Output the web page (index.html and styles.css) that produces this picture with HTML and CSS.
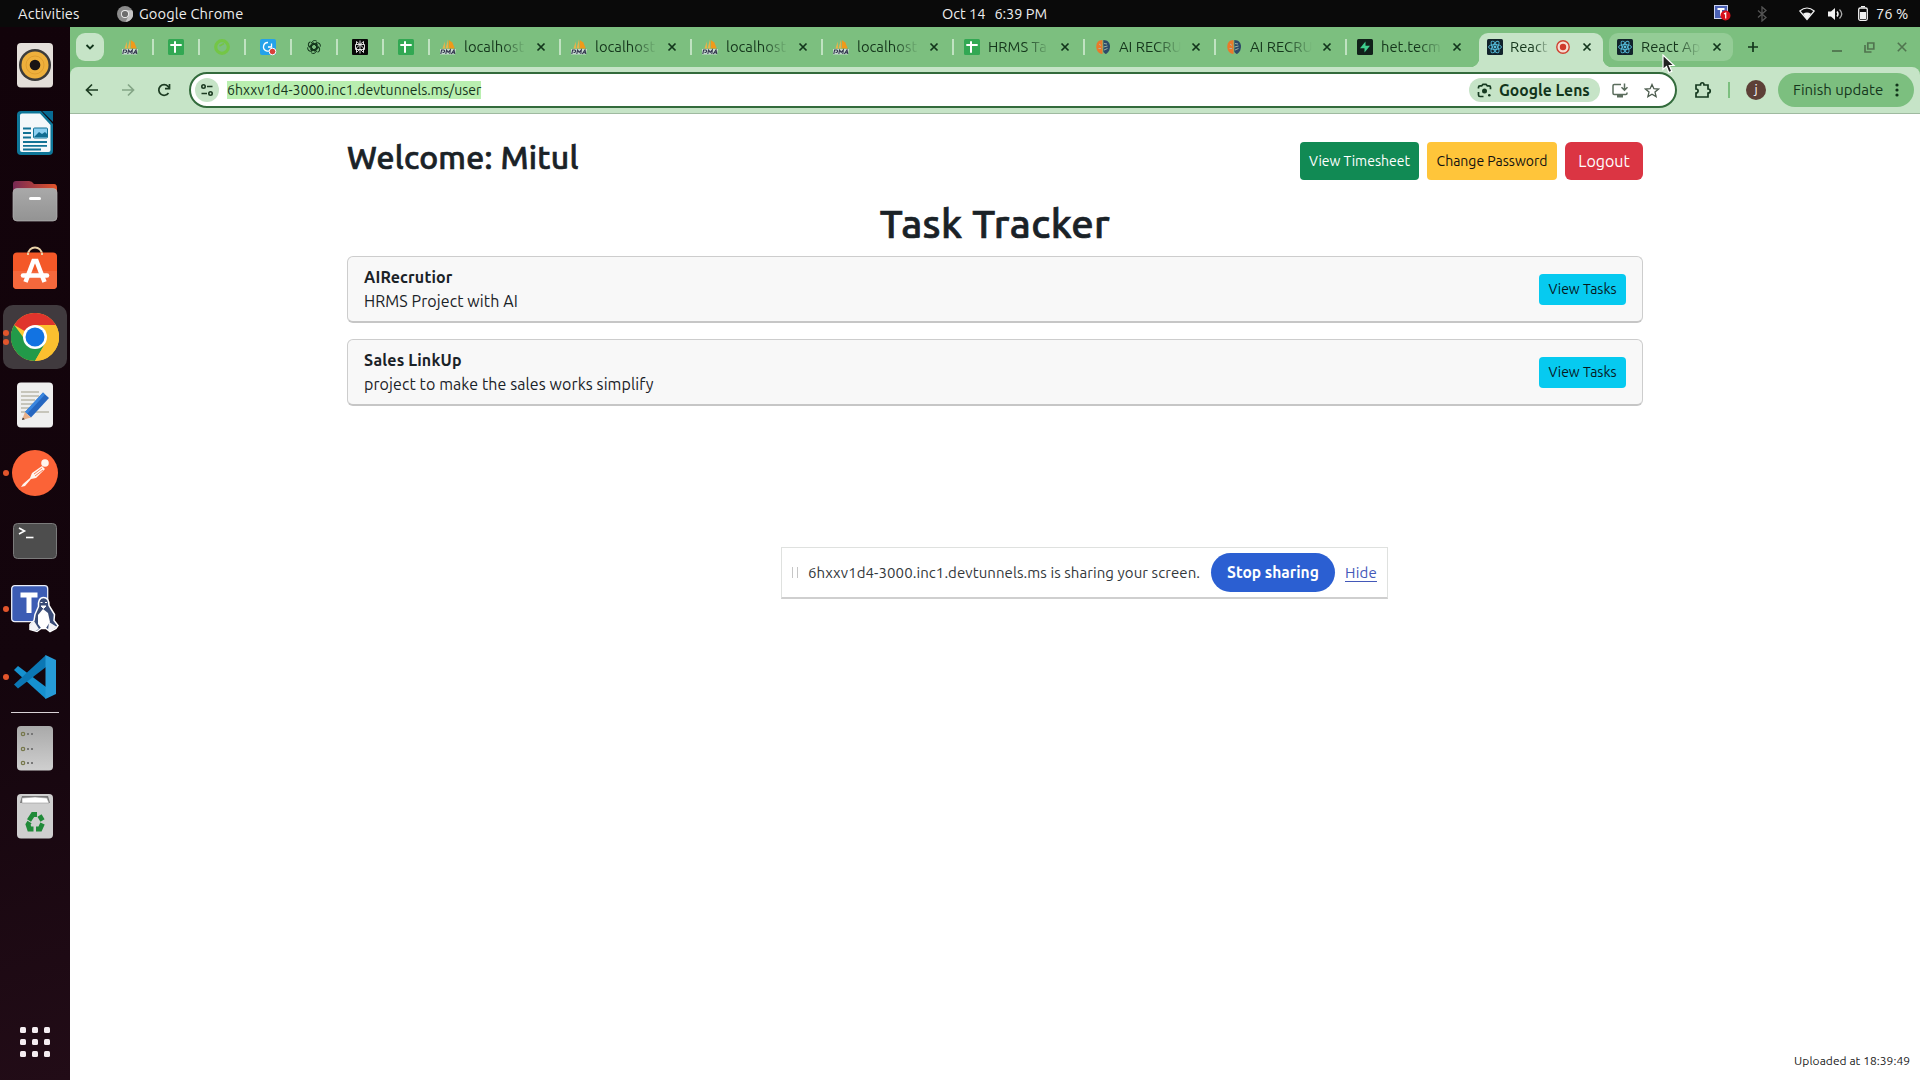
FILE: index.html
```html
<!DOCTYPE html>
<html lang="en">
<head>
<meta charset="utf-8">
<title>Task Tracker</title>
<link rel="stylesheet" href="styles.css">
</head>
<body>
<svg width="0" height="0" class="defs" aria-hidden="true">
  <defs>
    <symbol id="pma" viewBox="0 0 16 16"><path d="M2.500 9.500 4.800 2.500 5 9.500zM5.500 9.500 8 .5l.4 9z" fill="#e9b34a"/><path d="M8.800 9.500V1l3.500 2.500 2.500 6z" fill="#f09a1a"/><path d="M0 10h16l-1 5.500H0z" fill="#dfe3ea" opacity=".75"/><path d="M.8 15l.8-4h2q1.300.2 1 1.500T2.500 13.300M5.800 15l.8-4 1.600 2.300L10.300 11l-.5 4M11.300 15l2.700-4 .8 4m-2.300-1.200h2" fill="none" stroke="#30334c" stroke-width="1.100"/></symbol>
    <symbol id="sheet" viewBox="0 0 16 16"><rect width="16" height="16" rx="1.500" fill="#32a853"/><path d="M2.300 6h11.400M7 2.300v11.400" stroke="#fff" stroke-width="2"/></symbol>
    <symbol id="close" viewBox="0 0 10 10"><path d="M1.500 1.500l7 7m0-7l-7 7" stroke="#12351b" stroke-width="1.700"/></symbol>
    <symbol id="brain" viewBox="0 0 16 16"><path d="M7.500 1C3 1 1.500 4 1.300 7c-.2 4 2 8 6.200 8z" fill="#e9792b"/><path d="M8.300 1C13 1 14.800 4 15 7c.1 4-2 7.500-4.500 8l-2.200-2z" fill="#2d4a68"/><path d="M9 4.500l3 .5m-3.500 3l4-1M9 11l3.500-1.500M4 5l2 1.500M3.500 9.500H6" stroke="#a8bda8" stroke-width=".9" fill="none"/></symbol>
    <symbol id="react" viewBox="0 0 16 16"><rect width="16" height="16" rx="1.500" fill="#12232b"/><g fill="none" stroke="#56bcdc" stroke-width=".9"><ellipse cx="8" cy="8" rx="6.500" ry="2.500"/><ellipse cx="8" cy="8" rx="6.500" ry="2.500" transform="rotate(60 8 8)"/><ellipse cx="8" cy="8" rx="6.500" ry="2.500" transform="rotate(120 8 8)"/></g><circle cx="8" cy="8" r="1.400" fill="#56bcdc"/></symbol>
  </defs>
</svg>

<header class="topbar">
  <span class="t activities">Activities</span>
  <svg class="app-icon" width="16" height="16" viewBox="0 0 16 16"><circle cx="8" cy="8" r="8" fill="#8b8b8b"/><path d="M8 4.200h7.200A8 8 0 0 1 8.500 16l3-6z" fill="#c4c4c4"/><circle cx="8" cy="8" r="4" fill="#eee"/><circle cx="8" cy="8" r="3.100" fill="#6d6d6d"/></svg>
  <span class="t app-name">Google Chrome</span>
  <span class="clock"><span class="t">Oct 14</span><span class="t">6:39 PM</span></span>
  <div class="tray">
    <svg width="17" height="17" viewBox="0 0 17 17"><rect x=".5" y=".5" width="13" height="13" fill="#4a60b4" stroke="#ccd3ee"/><path d="M3.500 4h7M7 4v7" stroke="#fff" stroke-width="2"/><circle cx="11.500" cy="10.500" r="5" fill="#d8101c"/><path d="M10 9l1.700-1v5.500" fill="none" stroke="#fff" stroke-width="1.200"/></svg>
    <svg class="bt" width="10" height="16" viewBox="0 0 10 16"><path d="M1 4.500l8 7L5 15V1l4 3.500-8 7" fill="none" stroke="#555" stroke-width="1.300"/></svg>
    <svg class="wifi" width="16" height="14" viewBox="0 0 16 14"><path d="M.8 4Q8-2 15.200 4L8 12.500z" fill="none" stroke="#f2f2f2" stroke-width="1.200"/><path d="M4 6.800q4-2.500 8 0L8 12.500z" fill="#f2f2f2"/></svg>
    <svg class="vol" width="16" height="14" viewBox="0 0 16 14"><path d="M0 4.500h3L7 1v12L3 9.500H0z" fill="#f2f2f2"/><path d="M9 4.500q2 2.500 0 5" fill="none" stroke="#f2f2f2" stroke-width="1.500"/><path d="M11.500 2.500q4.500 4.500 0 9" fill="none" stroke="#aaa" stroke-width="1.300"/></svg>
    <svg class="bat" width="10" height="15" viewBox="0 0 10 15"><rect x=".7" y="2" width="8.600" height="12.300" rx="1.500" fill="none" stroke="#f2f2f2" stroke-width="1.300"/><path d="M3 .6h4" stroke="#f2f2f2" stroke-width="1.200"/><path d="M2 6h6v7H2z" fill="#f2f2f2"/></svg>
    <span class="t percent">76 %</span>
  </div>
</header>

<div class="desktop">
  <nav class="dock">
    <div class="dock-item"><svg viewBox="0 0 48 48"><rect x="6" y="2" width="36" height="44.500" rx="4" fill="#e4dfda"/><circle cx="24" cy="24" r="16" fill="#3b3b3a"/><circle cx="24" cy="24" r="13.500" fill="#eeb03c"/><circle cx="24" cy="24" r="9" fill="none" stroke="#d7962a" stroke-width=".7"/><circle cx="24" cy="24" r="5.300" fill="#191414"/></svg></div>
    <div class="dock-item"><svg viewBox="0 0 48 48"><path d="M10 2h20l12 13v27q0 4-4 4H10q-4 0-4-4V6q0-4 4-4z" fill="#0e7698"/><path d="M11 4.500h18L39.500 16v25q0 2-2 2H11q-2 0-2-2V6.500q0-2 2-2z" fill="#f4f8fa"/><path d="M31 2h11v11z" fill="#086b93"/><path d="M12 19.500h8m-8 4.500h8m-8 4.500h8M12 33h24m-24 3.800h24M12 40.500h18" stroke="#127295" stroke-width="1.800"/><rect x="22.500" y="19" width="14" height="10" rx="1" fill="#8dcff0" stroke="#127295"/><path d="M23 28l5-5 3 2 3-2 2 2v3z" fill="#116c91"/></svg></div>
    <div class="dock-item"><svg viewBox="0 0 48 48"><defs><linearGradient id="fo"><stop stop-color="#772953"/><stop offset="1" stop-color="#e2542a"/></linearGradient><linearGradient id="fg" x2="0" y2="1"><stop stop-color="#a9a9a9"/><stop offset="1" stop-color="#939393"/></linearGradient></defs><path d="M2 19V7q0-3 3-3h13q3 0 5 3h20q3 0 3 4v8z" fill="url(#fo)"/><rect x="2" y="11.500" width="44" height="32.500" rx="4" fill="url(#fg)" stroke="#b5b5b5" stroke-width=".7"/><rect x="18" y="20" width="12" height="3" rx="1.500" fill="#fff"/></svg></div>
    <div class="dock-item"><svg viewBox="0 0 48 48"><path d="M17 10c0-10 14-10 14 0" fill="none" stroke="#ead2a8" stroke-width="2"/><rect x="2" y="7.500" width="44" height="36.500" rx="4" fill="#f45828"/><path d="M2 26h44v14q0 4-4 4H6q-4 0-4-4z" fill="#f4683c"/><path d="M17 10V8m14 2V8" stroke="#ead2a8" stroke-width="2"/><path d="M14.500 37L22.500 16h3L33.500 37" fill="none" stroke="#fff" stroke-width="4.500"/><path d="M12 30.500h24" stroke="#fff" stroke-width="4.500" stroke-linecap="round"/></svg></div>
    <div class="dock-item active"><i class="dot two"></i><svg viewBox="0 0 48 48"><circle cx="24" cy="24" r="24" fill="#fcc934"/><path d="M24 24L3.200 12A24 24 0 0 1 44.800 12z" fill="#e0342c"/><path d="M24 24h-12L3.200 12A24 24 0 0 0 24 48l10.400-18z" fill="#229a49"/><path d="M24 12h20.800A24 24 0 0 1 24 48l10.400-18z" fill="#fbc02f"/><circle cx="24" cy="24" r="12" fill="#fff"/><circle cx="24" cy="24" r="9.500" fill="#1273e2"/></svg></div>
    <div class="dock-item"><svg viewBox="0 0 48 48"><rect x="6" y="1.500" width="36" height="45" rx="4" fill="#efefef"/><path d="M10 11h18m-18 4h18m-18 4h14m-14 4h12m-12 4h8m-8 4h28" stroke="#bbb8ab" stroke-width="1.400"/><path d="M32 11.500l6 5.500-18 19.500-6-5.500z" fill="#2666c0"/><path d="M32 11.500l2 2-18 19.500-2-2z" fill="#3b86df"/><path d="M14 31l6 5.500L11 39z" fill="#e8b08a"/><path d="M11.800 36.500l2 1.700L11 39z" fill="#333"/></svg></div>
    <div class="dock-item"><i class="dot"></i><svg viewBox="0 0 48 48"><circle cx="24" cy="24" r="23" fill="#fb6337"/><circle cx="34" cy="14" r="3.800" fill="#fff4ee"/><path d="M31 17l3 3-9 9-5 1-6 7-4 1 2-3 7-6 2-5z" fill="#fff4ee"/><path d="M23 25l8-6m-7 8l8-6" stroke="#fb6337" stroke-width=".8"/></svg></div>
    <div class="dock-item"><svg viewBox="0 0 48 48"><rect x="2.500" y="6.500" width="43" height="35" rx="4" fill="#4d4d4d" stroke="#7b7b7b"/><path d="M8 11l5.500 3L8 17" fill="none" stroke="#fff" stroke-width="1.600"/><path d="M15 20.500h7.500" stroke="#fff" stroke-width="1.600"/></svg></div>
    <div class="dock-item"><i class="dot"></i><svg viewBox="0 0 48 48" overflow="visible"><rect x=".7" y=".7" width="36" height="36" rx="3" fill="#3c5cb4" stroke="#e9edf8" stroke-width="1.300"/><path d="M9.500 10h17M18 10v18" stroke="#fff" stroke-width="5"/><path d="M32.500 12.500c4.500 0 5.500 3.500 5.500 8l5.500 9-.5 6 4 5-2 3-6 3-4-3h-5l-4 3-7-2v-5l4-4 1-6 3.500-8c-.5-5 1-9 5-9z" fill="#394c78" stroke="#fff" stroke-width="1.500"/><path d="M32 24l-5 6v9l3 4h5l4-6-2-9z" fill="#fff"/><path d="M23 36l5 8-4 2-5-1.500v-4zM38 37l8 5-7 4.500-2-1.500z" fill="#f4f4f7"/><path d="M30 21h5l-2.500 2.500zM29.500 17.500h2m2.500 0h2" stroke="#fff" fill="#fff"/></svg></div>
    <div class="dock-item"><i class="dot"></i><svg viewBox="0 0 48 48"><path d="M3 17l4-4 28 21v12z" fill="#1691cf"/><path d="M3 31.500l4 4L35 14V2z" fill="#0b77b4"/><path d="M34.500 2L45 7v34l-10.500 5z" fill="#269bd7"/></svg></div>
    <hr class="dock-line">
    <div class="dock-item"><svg viewBox="0 0 48 48"><defs><linearGradient id="dr" x2="0" y2="1"><stop stop-color="#a9a9a9"/><stop offset="1" stop-color="#cfcfcf"/></linearGradient></defs><rect x="6" y="2" width="36" height="44.500" rx="4" fill="url(#dr)"/><g fill="none" stroke="#76774a" stroke-width="1.200"><circle cx="12" cy="10" r="1.700"/><circle cx="12" cy="25" r="1.700"/><circle cx="12" cy="39" r="1.700"/></g><path d="M16 10h2m2 0h2m-6 15h2m2 0h2m-6 14h2m2 0h2" stroke="#777" stroke-width="1.800"/></svg></div>
    <div class="dock-item"><svg viewBox="0 0 48 48"><rect x="6" y="2" width="36" height="44.500" rx="4" fill="#cfcfcf"/><path d="M9 11l2-7h26l2 7z" fill="#777"/><path d="M11 11V6l13-1 12 1 2 5z" fill="#fff" stroke="#999" stroke-width=".6"/><g fill="none" stroke="#218a39" stroke-width="4.800"><path d="M18 28.500l4-6h4"/><path d="M28.500 23.500l3 5"/><path d="M31.500 31.500l-2.500 5.500h-4"/><path d="M22.500 37h-4L17 32.500l1.500-2.500"/></g></svg></div>
    <div class="app-grid"><i></i><i></i><i></i><i></i><i></i><i></i><i></i><i></i><i></i></div>
  </nav>

  <section class="browser">
    <div class="tabstrip">
      <div class="tab-search"><svg width="10" height="8" viewBox="0 0 10 8"><path d="M1.500 2l3.500 3.500L8.500 2" fill="none" stroke="#12351b" stroke-width="1.800"/></svg></div>
      <div class="pin"><svg><use href="#pma"/></svg></div>
      <div class="pin"><svg><use href="#sheet"/></svg></div>
      <div class="pin"><svg viewBox="0 0 16 16"><circle cx="8" cy="8" r="6.300" fill="none" stroke="#74c646" stroke-width="3.200"/><path d="M5.500 7l4.500-2.500" stroke="#74c646" stroke-width="1.500"/></svg></div>
      <div class="pin"><svg viewBox="0 0 16 16" overflow="visible"><rect width="16" height="16" rx="2" fill="#24a2ea"/><path d="M8 3.500a4.300 4.300 0 1 0 3.500 6.500M8 8h3.500V4.500" fill="none" stroke="#fff" stroke-width="1.300"/><circle cx="12.500" cy="12.500" r="3.300" fill="#d9403a" stroke="#fff"/></svg></div>
      <div class="pin"><svg viewBox="0 0 16 16"><g fill="none" stroke="#12351b" stroke-width="1"><path id="petal" d="M8 5.200l2.600 1.500v4.100L8 12.300M8 5.200L5.300 3.700M10.600 6.700l-5-2.900C6.500 1.500 9 .8 10.800 2.300"/><use href="#petal" transform="rotate(60 8 8)"/><use href="#petal" transform="rotate(120 8 8)"/><use href="#petal" transform="rotate(180 8 8)"/><use href="#petal" transform="rotate(240 8 8)"/><use href="#petal" transform="rotate(300 8 8)"/></g></svg></div>
      <div class="pin"><svg viewBox="0 0 16 16"><rect width="16" height="16" rx="1" fill="#080808"/><path d="M8 1.500v13M3.500 5.500h9v5h-9zM4.500 5.500v-3L8 5.500l3.500-3v3M8 5.500L4.500 9v4.500L8 10l3.500 3.500V9z" fill="none" stroke="#f0f0f0" stroke-width=".9"/></svg></div>
      <div class="pin"><svg><use href="#sheet"/></svg></div>
      <div class="tab"><svg class="fav"><use href="#pma"/></svg><span class="t title">localhost</span><svg class="x"><use href="#close"/></svg></div>
      <div class="tab"><svg class="fav"><use href="#pma"/></svg><span class="t title">localhost</span><svg class="x"><use href="#close"/></svg></div>
      <div class="tab"><svg class="fav"><use href="#pma"/></svg><span class="t title">localhost</span><svg class="x"><use href="#close"/></svg></div>
      <div class="tab"><svg class="fav"><use href="#pma"/></svg><span class="t title">localhost</span><svg class="x"><use href="#close"/></svg></div>
      <div class="tab"><svg class="fav"><use href="#sheet"/></svg><span class="t title">HRMS Ta</span><svg class="x"><use href="#close"/></svg></div>
      <div class="tab"><svg class="fav"><use href="#brain"/></svg><span class="t title">AI RECRU</span><svg class="x"><use href="#close"/></svg></div>
      <div class="tab"><svg class="fav"><use href="#brain"/></svg><span class="t title">AI RECRU</span><svg class="x"><use href="#close"/></svg></div>
      <div class="tab last"><svg class="fav" viewBox="0 0 16 16"><rect width="16" height="16" rx="1.500" fill="#11211a"/><path d="M8.500 2.500v4.300h4.500L7.500 13.500V9.200H3z" fill="#3fcf8e"/></svg><span class="t title">het.tecm</span><svg class="x"><use href="#close"/></svg></div>
      <div class="tab current"><svg class="fav"><use href="#react"/></svg><span class="t title">React</span><svg class="rec" width="14" height="14" viewBox="0 0 14 14"><circle cx="7" cy="7" r="6.200" fill="#f6ddd2" stroke="#cf4030" stroke-width="1.400"/><circle cx="7" cy="7" r="3.200" fill="#d0392b"/></svg><svg class="x"><use href="#close"/></svg></div>
      <div class="tab hover"><svg class="fav"><use href="#react"/></svg><span class="t title">React Ap</span><svg class="x"><use href="#close"/></svg>
        <svg class="cursor" width="14" height="20" viewBox="0 0 14 20"><path d="M1 1v14.500l3.500-3 2.300 6 3-1.200-2.500-5.800H12z" fill="#222" stroke="#fff" stroke-width="1.200"/></svg>
      </div>
      <svg class="plus" width="12" height="12" viewBox="0 0 12 12"><path d="M6 1v10M1 6h10" stroke="#12351b" stroke-width="1.700"/></svg>
      <div class="win">
        <svg width="10" height="10" viewBox="0 0 10 10"><path d="M0 9h10" stroke="#50744f" stroke-width="1.800"/></svg>
        <svg width="11" height="11" viewBox="0 0 11 11"><path d="M3.800 1h6v6h-6z M1 3v7h6.500" fill="none" stroke="#50744f" stroke-width="1.700"/></svg>
        <svg width="10" height="10" viewBox="0 0 10 10"><path d="M.8.8l8.400 8.400m0-8.400L.8 9.200" stroke="#50744f" stroke-width="1.600"/></svg>
      </div>
    </div>

    <div class="toolbar">
      <div class="nav">
        <svg width="14" height="14" viewBox="0 0 14 14"><path d="M13 7H2m5-5.500L1.500 7 7 12.500" fill="none" stroke="#1c3b22" stroke-width="1.700"/></svg>
        <svg width="14" height="14" viewBox="0 0 14 14"><path d="M1 7h11M7 1.500L12.500 7 7 12.500" fill="none" stroke="#84a586" stroke-width="1.700"/></svg>
        <svg width="14" height="14" viewBox="0 0 14 14"><path d="M11.500 10A5.300 5.300 0 1 1 11 3.400L12.500 5" fill="none" stroke="#1c3b22" stroke-width="1.700"/><path d="M12.500 1v4.700H8" fill="none" stroke="#1c3b22" stroke-width="1.700"/></svg>
      </div>
      <div class="omnibox">
        <span class="site"><svg width="14" height="14" viewBox="0 0 14 14"><g fill="none" stroke="#1c3b22" stroke-width="1.600"><circle cx="3.500" cy="3.500" r="1.700"/><path d="M7 3.500h5.500M1.500 10.500H7"/><circle cx="10.500" cy="10.500" r="1.700"/></g></svg></span>
        <span class="t url">6hxxv1d4-3000.inc1.devtunnels.ms/user</span>
        <span class="lens"><svg width="15" height="15" viewBox="0 0 15 15"><g fill="none" stroke="#163a20" stroke-width="1.700"><path d="M1.500 5.500V4.200q0-1.400 1.500-1.400h1.700L6 1.300h3l1.300 1.500H12q1.500 0 1.500 1.400v2M1.500 9v3q0 1.500 1.500 1.500h3.500"/></g><circle cx="7.500" cy="8" r="2.500" fill="#163a20"/><circle cx="12.300" cy="12.300" r="1.300" fill="#163a20"/></svg><span class="t">Google Lens</span></span>
        <svg class="inst" width="17" height="15" viewBox="0 0 17 15"><path d="M9 1.500H2.200Q1 1.500 1 2.700v7.600q0 1.200 1.200 1.200h11.600q1.200 0 1.200-1.200V9.500M12.500.5v6.500m-3-2.700l3 3 3-3" fill="none" stroke="#5b6d5d" stroke-width="1.500"/><path d="M5 12h6v2.500H5z" fill="#5b6d5d"/></svg>
        <svg class="star" width="16" height="15" viewBox="0 0 16 15"><path d="M8 1.500l1.900 4.200 4.600.4-3.500 3 1.100 4.500L8 11.200l-4.100 2.400L5 9.100l-3.500-3 4.600-.4z" fill="none" stroke="#4c5c4e" stroke-width="1.300"/></svg>
      </div>
      <svg class="ext" width="18" height="18" viewBox="0 0 18 18"><path d="M2 4h4.500C6.500 1 10 1 10 4h4v4c3 0 3 4 0 4v4H2v-4c2.800 0 2.800-4 0-4z" fill="none" stroke="#163a20" stroke-width="1.700"/></svg>
      <i class="tool-sep"></i>
      <span class="avatar t">j</span>
      <span class="update"><span class="t">Finish update</span><svg width="4" height="16" viewBox="0 0 4 16"><g fill="#12351b"><circle cx="2" cy="3" r="1.600"/><circle cx="2" cy="8" r="1.600"/><circle cx="2" cy="13" r="1.600"/></g></svg></span>
    </div>

    <main class="page">
      <div class="container">
        <div class="head">
          <h2 class="t">Welcome: Mitul</h2>
          <div class="actions">
            <button class="btn green">View Timesheet</button>
            <button class="btn yellow">Change Password</button>
            <button class="btn red">Logout</button>
          </div>
        </div>
        <h1>Task Tracker</h1>
        <div class="card">
          <div class="info"><b class="t">AIRecrutior</b><span class="t">HRMS Project with AI</span></div>
          <button class="btn cyan">View Tasks</button>
        </div>
        <div class="card">
          <div class="info"><b class="t">Sales LinkUp</b><span class="t">project to make the sales works simplify</span></div>
          <button class="btn cyan">View Tasks</button>
        </div>
      </div>
      <div class="share">
        <i class="grip"></i>
        <span class="t share-text">6hxxv1d4-3000.inc1.devtunnels.ms is sharing your screen.</span>
        <span class="stop t">Stop sharing</span>
        <a class="t hide">Hide</a>
      </div>
      <div class="t uploaded">Uploaded at 18:39:49</div>
    </main>
  </section>
</div>
</body>
</html>
```
FILE: styles.css
```css
* { box-sizing: border-box; }
html, body { margin: 0; height: 100%; overflow: hidden; }
body { display: flex; flex-direction: column; font-family: Ubuntu, "Noto Sans", sans-serif; font-size: 15px; color: #1a2227; background: #fff; }
svg { display: block; flex: none; }
i { display: block; flex: none; }
.defs { position: absolute; }
.t { white-space: nowrap; }

/* top bar */
.topbar { height: 27px; flex: none; background: #0a0a0a; color: #eee; display: grid; grid-template-columns: 18px 99px 22px 803px 1fr 206px; align-items: center; font-size: 14.67px; }
.activities { grid-column: 2; letter-spacing: .15px; }
.app-name { grid-column: 4; letter-spacing: .12px; }
.clock { grid-column: 5; display: flex; gap: 9px; padding-bottom: 1px; font-size: 14.5px; }
.tray { grid-column: 6; display: flex; align-items: center; }
.bt { margin-left: 26px; }
.wifi { margin-left: 32px; }
.vol { margin-left: 13px; }
.bat { margin-left: 14px; }
.percent { margin-left: 8px; }

/* dock */
.desktop { flex: 1; display: flex; min-height: 0; }
.dock { width: 70px; flex: none; padding-top: 4px; display: flex; flex-direction: column; background: linear-gradient(165deg, #12030a 0%, #14050d 60%, #220c17 100%); }
.dock-item { height: 68px; flex: none; display: grid; place-items: center; position: relative; }
.dock-item svg { width: 48px; height: 48px; }
.dock-item.active::before { content: ""; position: absolute; inset: 2px 3px; background: #403a3e; border-radius: 10px; }
.dock-item.active svg { position: relative; }
.dot { position: absolute; left: 3px; top: 31px; width: 6px; height: 6px; border-radius: 50%; background: #e2552c; }
.dot.two { top: 27px; box-shadow: 0 9px #e2552c; }
.dock-line { width: 48px; height: 1px; flex: none; margin: 1px auto; border: 0; background: #d9d2d6; }
.app-grid { margin: auto auto 23px; display: grid; grid-template-columns: repeat(3, 6px); gap: 6px; }
.app-grid i { height: 6px; background: #f5edf1; border-radius: 1.5px; }

/* tab strip */
.browser { flex: 1; display: flex; flex-direction: column; min-width: 0; }
.tabstrip { height: 40px; flex: none; display: flex; align-items: center; background: #7cbf7f; color: #15361c; font-size: 14.8px; padding-left: 6px; }
.tab-search { width: 28px; height: 28px; border-radius: 9px; background: #c6e4c7; display: grid; place-items: center; margin-right: 4px; }
.pin { width: 46px; flex: none; display: flex; padding-left: 14px; }
.pin svg, .fav { width: 16px; height: 16px; flex: none; }
.pin, .tab { position: relative; }
.pin::after, .tab::after { content: ""; position: absolute; right: 0; top: calc(50% - 8px); width: 2px; height: 16px; background: #c0e2c1; }
.tab { width: 131px; flex: none; display: flex; align-items: center; padding: 0 15px 0 10px; }
.title { width: 62px; margin-left: 8px; padding-bottom: 2px; -webkit-mask-image: linear-gradient(90deg, #000 60%, transparent); mask-image: linear-gradient(90deg, #000 60%, transparent); }
.x { width: 10px; height: 10px; margin-left: auto; }
.tab.last::after, .tab.current::after, .tab.hover::after { display: none; }
.tab.last { margin-right: 1px; padding-right: 16px; }
.tab.current { width: 124px; height: 34px; align-self: flex-end; padding: 0 11px 6px 8px; background: #c6e4c7; border-radius: 9px 9px 0 0; }
.tab.current::before { content: ""; position: absolute; left: -9px; right: -9px; bottom: 0; height: 9px; background: radial-gradient(circle at 0 0, transparent 9px, #c6e4c7 9.5px) left / 9px 9px no-repeat, radial-gradient(circle at 100% 0, transparent 9px, #c6e4c7 9.5px) right / 9px 9px no-repeat; }
.tab.current .title { width: 40px; margin-left: 7px; }
.rec { margin-left: 6px; }
.tab.hover { width: 124px; height: 28px; margin-left: 6px; padding: 0 11px 0 8px; background: #94cc96; border-radius: 9px; }
.tab.hover .title { width: 60px; margin-left: 8px; }
.cursor { position: absolute; left: 53px; top: 21px; z-index: 3; }
.plus { margin-left: 14px; }
.win { margin-left: auto; margin-right: 13px; display: flex; gap: 22px; align-items: center; }

/* toolbar */
.browser { background: #7cbf7f; }
.toolbar { height: 47px; flex: none; display: flex; align-items: center; background: #c6e4c7; border-bottom: 1px solid #9fbaa0; border-radius: 8px 8px 0 0; padding-right: 6px; }
.nav { display: flex; gap: 22px; width: 119px; padding-left: 15px; }
.omnibox { width: 1488px; height: 36px; flex: none; background: #fff; border: 2px solid #336b3c; border-radius: 18px; display: flex; align-items: center; padding-left: 4px; }
.site { width: 24px; height: 24px; border-radius: 50%; background: #c6e4c7; display: grid; place-items: center; }
.url { margin-left: 8px; background: #b9efb0; color: #17331d; font-size: 14px; line-height: 18px; letter-spacing: .04px; }
.lens { margin-left: auto; width: 131px; height: 24px; border-radius: 12px; background: #c6e4c7; color: #12351b; display: flex; align-items: center; gap: 7px; padding-left: 8px; font-weight: 600; font-size: 15.7px; }
.inst { margin-left: 12px; }
.star { margin: 0 15px; }
.ext { margin-left: 17px; }
.tool-sep { width: 2px; height: 16px; background: #7cbf7f; margin-left: 16px; }
.avatar { width: 20px; height: 20px; margin-left: 16px; border-radius: 50%; background: #5d4037; color: #fff; font-size: 13px; line-height: 18px; text-align: center; }
.update { margin-left: auto; width: 136px; height: 34px; border-radius: 17px; background: #7cbf7f; color: #15361c; display: flex; align-items: center; justify-content: space-between; padding: 0 15px; font-size: 15px; }
.update .t { padding-bottom: 1px; }

/* page */
.page { flex: 1; position: relative; background: #fff; }
.container { width: 1296px; margin: 0 auto 0 277px; padding-top: 28px; }
.head { display: flex; justify-content: space-between; height: 62px; }
h1, h2 { font-weight: 500; -webkit-text-stroke: .7px currentColor; }
h2 { margin: -4px 0 0; font-size: 32px; line-height: 38px; letter-spacing: .28px; }
.actions { display: flex; gap: 8px; align-items: flex-start; }
.btn { border: 0; height: 38px; padding: 0; font: inherit; font-size: 14px; border-radius: 4px; white-space: nowrap; }
.green { width: 119px; background: #118a54; color: #fff; }
.yellow { width: 130px; background: #ffc53a; color: #111; }
.red { width: 78px; background: #db3543; color: #fff; border-radius: 6px; font-size: 16px; }
.cyan { width: 87px; height: 31px; background: #06caf0; color: #06181e; }
h1 { margin: -7px 0 5px; font-size: 40px; line-height: 54px; letter-spacing: .38px; text-align: center; }
.card { height: 67px; margin-bottom: 16px; border: 1px solid #cdcdcd; border-bottom: 2px solid #c6c6c6; border-radius: 6px; background: #f8f8f8; display: flex; align-items: center; justify-content: space-between; padding: 0 16px; font-size: 16px; letter-spacing: .09px; }
.info { display: flex; flex-direction: column; align-items: flex-start; line-height: 24px; }
.info b { letter-spacing: .16px; }
.share { position: absolute; left: 711px; top: 433px; width: 607px; height: 52px; background: #fff; border: 1px solid #dfe1df; border-bottom: 2px solid #cfcfcf; display: flex; align-items: center; padding-left: 10px; font-size: 15px; color: #33383b; }
.grip { width: 6px; height: 11px; border: solid #c6c6c6; border-width: 0 1px; margin-right: 10px; }
.share-text { letter-spacing: .075px; }
.stop { position: absolute; left: 429px; top: 5px; width: 124px; height: 39px; line-height: 38px; border-radius: 20px; background: #2b5fd2; color: #fff; text-align: center; font-size: 15.6px; font-weight: 600; }
.hide { position: absolute; left: 563px; color: #4358b8; text-decoration: underline; text-underline-offset: 3px; letter-spacing: .2px; }
.uploaded { position: absolute; right: 10px; bottom: 13px; font-size: 12px; letter-spacing: .04px; color: #222; }
```
